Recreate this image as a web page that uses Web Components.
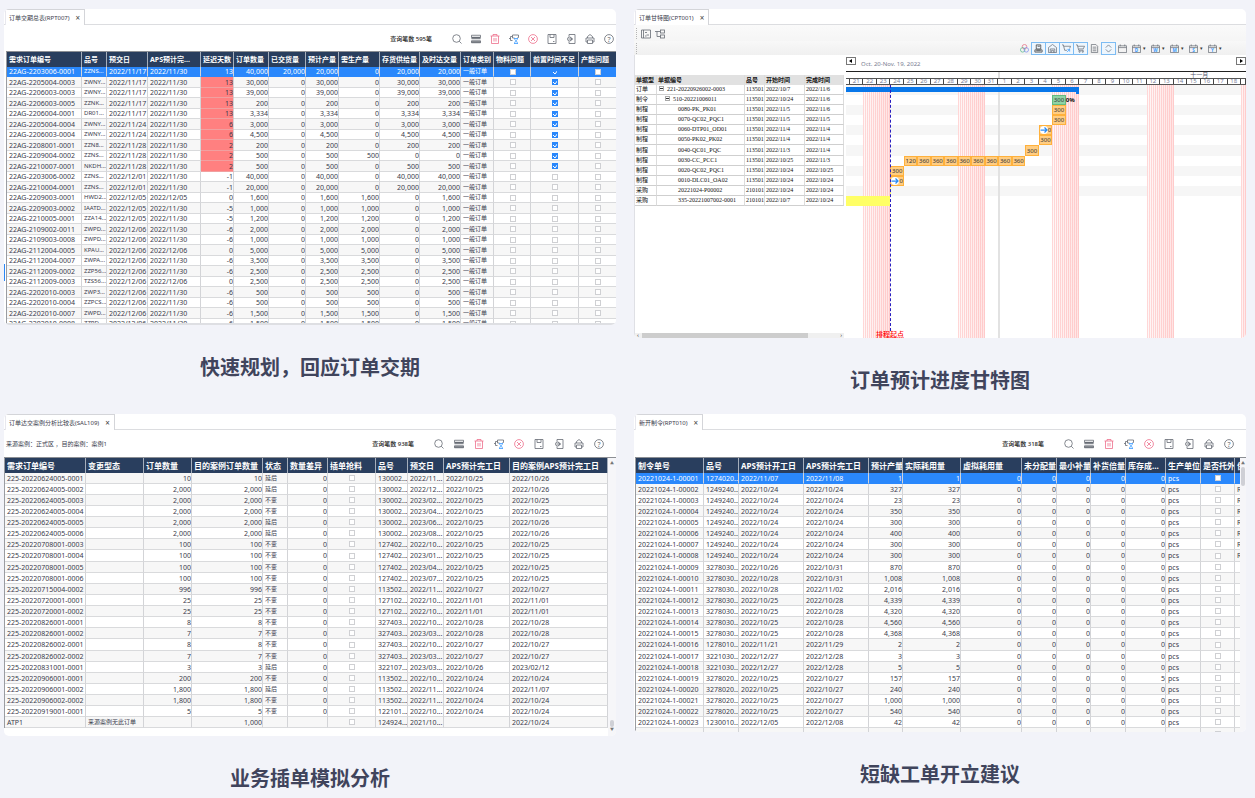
<!DOCTYPE html>
<html lang="zh-CN">
<head>
<meta charset="utf-8">
<title>APS 应用场景</title>
<style>
  html { background: #f2f3f9; }
  body { margin: 0; font-family: "Noto Sans", "Noto Sans CJK SC", sans-serif; color: #3a3b4c; }
</style>
</head>
<body>
<showcase-grid>
  <showcase-panel>
    <report-card tab="订单交期总表(RPT007)" edge>
      <report-toolbar count="595" class="tight"></report-toolbar>
      <data-grid source="delivery" class="dense"></data-grid>
    </report-card>
    <span slot="caption">快速规划，回应订单交期</span>
  </showcase-panel>
  <showcase-panel>
    <report-card tab="订单甘特图(CPT001)">
      <gantt-toolbar></gantt-toolbar>
      <gantt-chart></gantt-chart>
    </report-card>
    <span slot="caption">订单预计进度甘特图</span>
  </showcase-panel>
  <showcase-panel>
    <report-card tab="订单达交案例分析比较表(SAL109)">
      <report-toolbar count="938">来源案例：正式区 ，目的案例：案例1</report-toolbar>
      <data-grid source="compare" class="full"></data-grid>
    </report-card>
    <span slot="caption">业务插单模拟分析</span>
  </showcase-panel>
  <showcase-panel>
    <report-card tab="新开制令(RPT010)">
      <report-toolbar count="318"></report-toolbar>
      <data-grid source="orders" class="orders"></data-grid>
    </report-card>
    <span slot="caption">短缺工单开立建议</span>
  </showcase-panel>
</showcase-grid>

<script>
const G = '#666b73', P = '#ee6f8b', B = '#3b9bff';
const svg = (body, size = 20) => `<svg viewBox="0 0 ${size} ${size}" fill="none" stroke="${G}" stroke-width="1.6" aria-hidden="true">${body}</svg>`;
const ICONS = {
  search: svg('<circle cx="9" cy="9" r="7.6"/><path d="M14.5 14.5 19 19"/>'),
  list: svg('<path d="M1 2.5h18v4H1zM1 9.5h18M1 13.5h18v4H1z"/><path d="M1 7.5h18M1 16h18" stroke-width="3"/>'),
  trash: svg(`<g stroke="${P}"><path d="M1 4h18M6 4V1h8v3M3 4v15h14V4M8 8v7M12 8v7"/></g>`),
  flow: svg(`<path d="M7 5H3v8h4M3 9H0M7 2h12v5h-2M7 2v6h4"/><g stroke="${B}"><path d="M10 9h8M10 19h8M11 9c0 4 6 5 6 10M17 9c0 4-6 5-6 10"/></g>`),
  cancel: svg(`<g stroke="${P}"><circle cx="10" cy="10" r="8.8"/><path d="m6 6 8 8M14 6l-8 8"/></g>`),
  save: svg('<path d="M2 1h16v18H2zM6 1v6h8V1M12 15h3"/>'),
  exporter: svg('<path d="M6 5V1h12v18H6v-4"/><circle cx="7" cy="10" r="4"/><path d="M5 10h8M10 7l3 3-3 3"/>'),
  print: svg('<path d="M5 8V5l5-4 5 4v3M2 8h16v8h-3M2 8v8h3M5 12h10v7H5z"/>'),
  help: svg(`<circle cx="10" cy="10" r="8.8"/><text x="10" y="15" font-size="14" text-anchor="middle" fill="${G}" stroke="none">?</text>`),
  palette: svg('<circle cx="10" cy="6" r="5" stroke="#e66b80"/><circle cx="6" cy="13" r="5" stroke="#57b98a"/><circle cx="14" cy="13" r="5" stroke="#7a8df0"/>'),
  machine: svg('<path d="M5 2h10v9H5zM2 13h16v5H2z" stroke="#333"/><path d="M5 15h10M8 5h5" stroke="#333"/>'),
  house: svg('<path d="M1 8 10 1l9 7v11H1zM5 19v-8h10v8M8 19v-5h4v5"/>'),
  cartOut: svg(`<path d="M0 2h3l3 12h5M4 5h15l-2 5"/><path d="M11 18l6-6M12 12h5v5" stroke="${B}"/>`),
  cart: svg('<path d="M0 2h3l3 12h11M4 5h15l-3 6H6" /><circle cx="8" cy="17" r="1.5"/><circle cx="15" cy="17" r="1.5"/>'),
  page: svg('<path d="M3 1h10l4 4v14H3zM6 7h8M6 11h8M6 15h8"/>'),
  expand: svg('<path d="m4 8 6-6 6 6M4 12l6 6 6-6"/>'),
  board: svg('<path d="M1 2h18v16H1zM5 2v16M8 7h4M11 12h5M8 14h3"/>'),
  tree: svg('<path d="M0 5h10M4 5v10h7"/><rect x="11" y="2" width="8" height="6"/><rect x="11" y="12" width="8" height="6"/>')
};
const calendar = l => svg(`<path d="M1 4h18v15H1zM1 8h18M5 1v4M15 1v4"/>${l ? `<text x="10" y="17" font-size="10" font-weight="700" text-anchor="middle" fill="${B}" stroke="none">${l}</text>` : ''}`);

function define(name, template, setup) {
  const tpl = document.createElement('template');
  customElements.define(name, class extends HTMLElement {
    connectedCallback() {
      if (this.shadowRoot) return;
      tpl.innerHTML = typeof template === 'function' ? template(this) : template;
      this.attachShadow({ mode: 'open' }).appendChild(tpl.content.cloneNode(true));
      if (setup) setup(this);
    }
  });
}

/* ---------- page structure ---------- */
define('showcase-grid', `
<style>
  :host { display: grid; grid-template-columns: minmax(0,1fr) minmax(0,1fr); gap: 19px 18px; padding: 9px 9px 0 4px; align-items: start; }
</style><slot></slot>`);

define('showcase-panel', `
<style>
  :host { display: block; }
  figure { margin: 0; }
  figcaption { margin-top: 29px; text-align: center; font-size: 20px; line-height: 28px; font-weight: 700; color: #40445c; }
</style>
<figure><slot></slot><figcaption><slot name="caption"></slot></figcaption></figure>`);

define('report-card', el => `
<style>
  :host { display: block; position: relative; background: #fff; border-radius: 5px; overflow: hidden; }
  .tabs { display: flex; height: 15px; border-bottom: 1px solid #dcdde0; }
  .tab { display: flex; align-items: center; gap: 6px; margin: 0 0 -1px 1px; padding: 0 4px 0 3px; background: #fff; border: 1px solid #d4d5d9; border-bottom: 0; border-left-color: #e8e8ee; font-size: 6px; line-height: 8px; white-space: nowrap; }
  button { all: unset; font-size: 8px; line-height: 8px; color: #444; }
  .edge { position: absolute; left: 0; top: 255px; width: 1px; height: 17px; background: #2b87f5; }
</style>
<div class="tabs"><div class="tab"><span>${el.getAttribute('tab')}</span><button aria-label="关闭">×</button></div></div>
<slot></slot>${el.hasAttribute('edge') ? '<i class="edge"></i>' : ''}`);

define('report-toolbar', el => `
<style>
  :host { display: flex; align-items: center; height: 27px; padding: 0 12px 0 2px; font-size: 6px; line-height: 8px; white-space: nowrap; --gap: 10px; box-sizing: border-box; }
  :host(.tight) { height: 26px; padding-right: 2px; padding-top: 2px; --gap: 9px; }
  .count { margin-left: auto; margin-right: 20px; font-weight: 500; color: #222; }
  .icons { display: flex; gap: var(--gap); }
  button { all: unset; display: block; width: 10px; height: 10px; }
  svg { display: block; width: 10px; height: 10px; overflow: visible; }
</style>
<span><slot></slot></span><span class="count">查询笔数 ${el.getAttribute('count')}笔</span>
<div class="icons">${[['search','查询'],['list','列表'],['trash','删除'],['flow','流程'],['cancel','取消'],['save','保存'],['exporter','导出'],['print','打印'],['help','帮助']]
  .map(([k, l]) => `<button aria-label="${l}">${ICONS[k]}</button>`).join('')}</div>`);

/* ---------- data ---------- */
const box = v => ({ check: v });
const delivery = `2203006-0001|ZZNS|11/17|11/30|13|40,000|20,000|20,000|0|20,000|20,000
2205004-0003|ZWNY|11/17|11/30|13|30,000|0|30,000|0|30,000|30,000
2206003-0003|ZWNY|11/17|11/30|13|39,000|0|39,000|0|39,000|39,000
2206003-0005|ZZNK|11/17|11/30|13|200|0|200|0|200|200
2206004-0001|DR01|11/17|11/30|13|3,334|0|3,334|0|3,334|3,334
2205004-0004|ZWNY|11/24|11/30|6|3,000|0|3,000|0|3,000|3,000
2206003-0004|ZWNY|11/24|11/30|6|4,500|0|4,500|0|4,500|4,500
2208001-0001|ZZN8|11/28|11/30|2|200|0|200|0|200|200
2209004-0002|ZZNS|11/28|11/30|2|500|0|500|500|0|0
2210007-0001|NKDH|11/28|11/30|2|500|0|500|0|500|500
2203006-0002|ZZNS|12/01|11/30|-1|40,000|0|40,000|0|40,000|40,000
2210004-0001|ZZNS|12/01|11/30|-1|20,000|0|20,000|0|20,000|20,000
2209003-0001|HWD2|12/05|12/05|0|1,600|0|1,600|1,600|0|1,600
2209003-0002|IAATD|12/05|11/30|-5|1,000|0|1,000|1,000|0|1,000
2210005-0001|ZZA14|12/05|11/30|-5|1,200|0|1,200|1,200|0|1,200
2109002-0011|ZWPD|12/06|11/30|-6|2,000|0|2,000|2,000|0|2,000
2109003-0008|ZWPD|12/06|11/30|-6|1,000|0|1,000|1,000|0|1,000
2112004-0005|KPAU|12/06|12/06|0|5,000|0|5,000|5,000|0|5,000
2112004-0007|ZWPA|12/06|11/30|-6|3,500|0|3,500|3,500|0|3,500
2112009-0002|ZZP56|12/06|11/30|-6|2,500|0|2,500|2,500|0|2,500
2112009-0003|TZS56|12/06|12/06|0|2,500|0|2,500|2,500|0|2,500
2202010-0003|ZWP3|12/06|11/30|-6|500|0|500|500|0|500
2202010-0004|ZZPCS|12/06|11/30|-6|500|0|500|500|0|500
2202010-0007|ZWPD|12/06|11/30|-6|1,500|0|1,500|1,500|0|1,500
2202010-0008|ZZPD|12/06|11/30|-6|1,500|0|1,500|1,500|0|1,500`.split('\n').map((line, i) => {
  const c = line.split('|');
  return ['22AG-' + c[0], c[1] + '...', '2022/' + c[2], '2022/' + c[3], ...c.slice(4), '一般订单', box(false), box(i < 10), box(false)];
});
const compare = `0624005-0001|10|延后|130002|2022/11|10/25|2022/10/26
0624005-0002|2,000|延后|130002|2022/12|10/25|2022/10/26
0624005-0003|2,000|不变|130002|2023/02|10/25|2022/10/25
0624005-0004|2,000|不变|130002|2023/04|10/25|2022/10/25
0624005-0005|2,000|延后|130002|2023/06|10/25|2022/10/26
0624005-0006|2,000|延后|130002|2023/08|10/25|2022/10/26
0708001-0003|100|不变|127402|2022/10|10/25|2022/10/25
0708001-0004|100|不变|127402|2023/01|10/25|2022/10/25
0708001-0005|100|不变|127402|2023/04|10/25|2022/10/25
0708001-0006|100|不变|127402|2023/07|10/25|2022/10/25
0715004-0002|996|不变|113502|2022/11|10/27|2022/10/27
0720001-0001|25|不变|127102|2022/10|11/01|2022/11/01
0720001-0002|25|不变|127102|2022/10|11/01|2022/11/01
0826001-0001|8|不变|327403|2022/10|10/28|2022/10/28
0826001-0002|7|不变|327403|2023/03|10/28|2022/10/28
0826002-0001|8|不变|327403|2022/10|10/27|2022/10/27
0826002-0002|7|不变|327403|2023/03|10/27|2022/10/27
0831001-0001|3|延后|322107|2023/03|10/26|2023/02/12
0906001-0001|200|不变|113502|2022/10|10/24|2022/10/24
0906001-0002|1,800|延后|113502|2022/11|10/24|2022/11/07
0906002-0002|1,800|不变|113502|2022/11|10/24|2022/10/24
0919001-0001|5|不变|122101|2022/10|10/24|2022/10/24`.split('\n').map(line => {
  const c = line.split('|');
  return ['225-2022' + c[0], '', c[1], c[1], c[2], '0', box(false), c[3] + '...', c[4] + '...', '2022/' + c[5], c[6]];
});
compare.push(['ATP1', '来源案例无此订单', '', '1,000', '', '', box(false), '124924...', '2021/10...', '', '2022/10/24']);
const orders = `1274020|11/07|11/08|1
1249240|10/24|10/24|327
1249240|10/24|10/24|23
1249240|10/24|10/24|350
1249240|10/24|10/24|300
1249240|10/24|10/24|400
1249240|10/24|10/24|300
1249240|10/24|10/24|300
3278030|10/26|10/31|870
3278030|10/28|10/31|1,008
3278030|10/28|11/02|2,016
3278030|10/25|10/28|4,339
3278030|10/25|10/28|4,320
3278030|10/25|10/28|4,560
3278030|10/25|10/28|4,368
1278010|11/21|11/29|2
3221030|12/27|12/28|3
3221030|12/27|12/28|5
3278020|10/25|10/27|157
3278020|10/25|10/27|240
3278020|10/25|10/27|1,000
3278020|10/25|10/27|540
1230010|12/05|12/08|42`.split('\n').map((line, i) => {
  const c = line.split('|');
  return ['20221024-1-000' + String(i + 1).padStart(2, '0'), c[0] + '...', '2022/' + c[1], '2022/' + c[2], c[3], c[3], '0', '0', '0', '0', i === 18 ? '5' : '0', 'pcs', box(false), i > 0 && i < 8 ? 'R' : ''];
});
orders.push(Array.from({ length: 14 }, (_, i) => i === 12 ? box(false) : ''));

/* column: [title, width, alignment]; l = left, r = right, s = small text, c = tick box */
const SOURCES = {
  delivery: {
    rows: delivery, selected: 0, shade: 1, scroll: 'none',
    alert: (r, c) => c === 4 && r > 0 && r < 10,
    cols: [['需求订单编号',75,'l'],['品号',25,'s'],['预交日',41,'l'],['APS预计完...',53,'l'],['延迟天数',33,'r'],['订单数量',35,'r'],['已交货量',37,'r'],['预计产量',33,'r'],['需生产量',41,'r'],['存货供给量',40,'r'],['及时达交量',41,'r'],['订单类别',33,'s'],['物料问题',37,'c'],['前置时间不足',48,'c'],['产能问题',38,'c']]
  },
  compare: {
    rows: compare, selected: -1, shade: 0, scroll: 'bottom',
    cols: [['需求订单编号',81,'l'],['变更型态',58,'s'],['订单数量',48,'r'],['目的案例订单数量',71,'r'],['状态',25,'s'],['数量差异',40,'r'],['插单抢料',48,'c'],['品号',32,'l'],['预交日',36,'l'],['APS预计完工日',66,'l'],['目的案例APS预计完工日',98,'l']]
  },
  orders: {
    rows: orders, selected: 0, shade: 1, scroll: 'top',
    cols: [['制令单号',68,'l'],['品号',35,'l'],['APS预计开工日',65,'l'],['APS预计完工日',65,'l'],['预计产量',34,'r'],['实际耗用量',58,'r'],['虚拟耗用量',61,'r'],['未分配量',35,'r'],['最小补量',34,'r'],['补货倍量',35,'r'],['库存成...',40,'r'],['生产单位',35,'l'],['是否托外',34,'c'],['供应',6,'l']]
  }
};

define('data-grid', el => {
  const d = SOURCES[el.getAttribute('source')];
  const cell = (v, r, c) => {
    const [title, , align] = d.cols[c];
    const body = v && v.check !== undefined ? `<input type="checkbox" aria-label="${title}"${v.check ? ' checked' : ''}>` : v;
    return `<td class="${align}${d.alert && d.alert(r, c) ? ' alert' : ''}">${body}</td>`;
  };
  return `
<style>
  :host { display: flex; height: 279px; overflow: hidden; border-top: 1px solid #8c8f94; box-sizing: border-box; --head: 8px; --head-height: 15px; }
  :host(.dense) { height: 274px; margin-left: 2px; --head: 7px; }
  :host(.orders) { height: 275px; margin-left: 1px; }
  .view { flex: 1; min-width: 0; overflow: hidden; }
  :host(.dense) .view { border-bottom: 2px solid #dedfe3; box-sizing: border-box; }
  table { width: 100%; table-layout: fixed; border-collapse: separate; border-spacing: 0; border-left: 1px solid #9a9ca1; box-sizing: border-box; }
  th, td { box-sizing: border-box; padding: 0 1px 0 2px; overflow: hidden; white-space: nowrap; text-overflow: clip; text-align: left; border-right: 1px solid #d3d4d7; }
  th { height: var(--head-height); background: #293e5e; color: #fff; font-size: var(--head); line-height: 10px; font-weight: 700; border-right-color: #a5aebb; }
  td { border-bottom: 1px solid #d9dadc; font-size: 7px; line-height: 9px; }
  tbody tr { height: 11px; }
  tbody tr:nth-child(8n) { height: 12px; }
  :host(.dense) tbody tr { height: 10px; }
  :host(.dense) tbody tr:nth-child(2n) { height: 11px; }
  tr.shade td { background: #f7f7f7; }
  td.r { text-align: right; padding-right: 0; }
  td.s { font-size: 6px; }
  td.c { text-align: center; line-height: 0; }
  tr td.alert, tr.shade td.alert { background: #ff8080; border-bottom-color: #f0a0a0; }
  tr.on td { background: #2a88fc; color: #fff; border-bottom-color: #2a88fc; }
  input { appearance: none; display: inline-block; width: 6px; height: 6px; margin: 0; border: 1px solid #cfd0d3; background: #fff; box-sizing: border-box; vertical-align: middle; }
  input:checked { border-color: #2a88fc; background: #2a88fc url("data:image/svg+xml,%3Csvg xmlns='http://www.w3.org/2000/svg' viewBox='0 0 6 6'%3E%3Cpath d='M1 3l2 2 3-4' fill='none' stroke='white'/%3E%3C/svg%3E") center / 6px 6px no-repeat; }
  .bar { display: flex; flex-direction: column; align-items: center; width: 8px; padding: 3px 0; box-sizing: border-box; background: #f6f6f9; font-size: 4px; line-height: 6px; color: #777; }
  :host(.orders) .bar { width: 6px; }
  .thumb { width: 4px; border-radius: 2px; background: #cfd0d6; }
  .bar.top .thumb { height: 19px; }
  .bar.bottom .thumb { height: 7px; margin-top: auto; }
</style>
<div class="view"><table>
  <colgroup>${d.cols.map(c => `<col style="width:${c[1]}px">`).join('')}</colgroup>
  <thead><tr>${d.cols.map(c => `<th scope="col">${c[0]}</th>`).join('')}</tr></thead>
  <tbody>${d.rows.map((r, i) => `<tr class="${i === d.selected ? 'on' : i % 2 === d.shade ? 'shade' : ''}">${r.map((v, c) => cell(v, i, c)).join('')}</tr>`).join('')}</tbody>
</table></div>
${d.scroll === 'none' ? '' : `<div class="bar ${d.scroll}"><span>▲</span><i class="thumb"></i>${d.scroll === 'bottom' ? '<span>▼</span>' : ''}</div>`}`;
});

/* ---------- gantt ---------- */
define('gantt-toolbar', () => {
  const b = (k, l, on) => `<button aria-label="${l}" class="${on ? 'on' : ''}">${ICONS[k]}</button>`;
  return `
<style>
  :host { display: block; background: linear-gradient(#fafafa, #f1f1f1); }
  .row { display: flex; align-items: center; height: 15px; padding-left: 2px; }
  .row:first-of-type { height: 16px; }
  .row + .row { height: 14px; background: linear-gradient(#f8f8f8, #f0f0f0); padding-right: 22px; }
  .grip { height: 11px; border-left: 1px dotted #b5b5b5; margin-right: 2px; }
  button { all: unset; box-sizing: border-box; width: 14px; height: 13px; padding: 1px; border: 1px solid transparent; }
  .on { border-color: #7dbcf3; background: #eef6fd; margin-right: -1px; width: 15px; }
  .end { display: flex; margin-left: auto; align-items: center; }
  svg { display: block; width: 9px; height: 9px; margin: auto; }
  .row:first-of-type svg { width: 10px; height: 10px; }
  .drop { display: flex; align-items: center; width: 19px; color: #333; font-size: 5px; line-height: 8px; }
</style>
<div class="row"><i class="grip"></i>${b('board', '看板')}${b('tree', '树形')}</div>
<div class="row"><i class="grip"></i><div class="end">
${b('palette', '颜色')}${b('machine', '机台', 1)}${b('house', '仓库', 1)}${b('cartOut', '出货', 1)}${b('cart', '采购', 1)}${b('page', '单据')}${b('expand', '展开', 1)}
<button aria-label="日历">${calendar('')}</button>
${['D', 'W', 'M', 'S', 'Y'].map(l => `<span class="drop"><button aria-label="${l}">${calendar(l)}</button>▾</span>`).join('')}
</div></div>`;
});

define('gantt-chart', () => {
  const tasks = [
    ['订单', 0, '221-20220926002-0003', '113501', '2022/10/7', '2022/11/6'],
    ['制令', 1, '510-20221006011', '113501', '2022/10/24', '2022/11/6'],
    ['制程', 2, '0080-PK_PK01', '113501', '2022/11/5', '2022/11/6'],
    ['制程', 2, '0070-QC02_PQC1', '113501', '2022/11/5', '2022/11/5'],
    ['制程', 2, '0060-DTP01_OD01', '113501', '2022/11/4', '2022/11/4'],
    ['制程', 2, '0050-PK02_PK02', '113501', '2022/11/4', '2022/11/4'],
    ['制程', 2, '0040-QC01_PQC', '113501', '2022/11/3', '2022/11/4'],
    ['制程', 2, '0030-CC_PCC1', '113501', '2022/10/25', '2022/11/3'],
    ['制程', 2, '0020-QC02_PQC1', '113501', '2022/10/24', '2022/10/25'],
    ['制程', 2, '0010-DLC01_OA02', '113501', '2022/10/24', '2022/10/24'],
    ['采购', 2, '20221024-P00002', '210101', '2022/10/24', '2022/10/24'],
    ['采购', 2, '335-20221007002-0001', '210101', '2022/10/7', '2022/10/24']
  ];
  const days = Array.from({ length: 29 }, (_, i) => i < 11 ? 21 + i : i - 10);
  const oct = d => d - 19, nov = d => d + 12;
  const at = (row, col, cls, text = '', span = 1) => `<div class="${cls}" style="grid-area:${row}/${col}/auto/span ${span}">${text}</div>`;
  const arrow = '<svg viewBox="0 0 16 16"><circle cx="8" cy="8" r="8" fill="#fff"/><path d="M1 8h13M9 3l5 5-5 5" fill="none" stroke="#2b8cf5" stroke-width="2.5"/></svg>0';
  const bars = [
    at(1, 1, 'total', '', 18), at(2, nov(5), 'job done', '300'), at(2, nov(6), 'pct', '0%'),
    at(3, nov(5), 'job', '300'), at(4, nov(5), 'job', '300'), at(5, nov(4), 'job', arrow),
    at(6, nov(4), 'job', '300'), at(7, nov(3), 'job', '300'),
    ...['120', 360, 360, 360, 360, 360, 360, 360, 360].map((v, i) => at(8, oct(25) + i, 'job', v)),
    at(9, oct(24), 'job', '300'), at(10, oct(24), 'job', arrow), at(11, oct(24), 'buy thin'), at(12, 1, 'buy', '', 4)
  ].join('');
  return `
<style>
  :host { display: grid; grid-template-columns: minmax(0,210fr) minmax(0,402fr); height: 283px; --rows: repeat(6,10px) 11px repeat(5,10px) 1fr; }
  .left { display: flex; flex-direction: column; padding: 20px 0 0 1px; box-shadow: inset 1px 0 #dfe0e5; }
  table { width: 100%; table-layout: fixed; border-collapse: separate; border-spacing: 0; font-family: "Liberation Serif", "Noto Sans CJK SC", serif; color: #111; }
  th, td { box-sizing: border-box; padding: 0 0 0 1px; overflow: hidden; white-space: nowrap; text-align: left; font-size: 6px; line-height: 9px; border-right: 1px solid #dcdcdc; border-bottom: 1px solid #cfcfcf; }
  th { height: 10px; background: #e1e1e1; font-family: "Noto Sans CJK SC", sans-serif; font-weight: 700; border-bottom-color: #e1e1e1; }
  tbody tr { height: 10px; }
  tbody tr:nth-child(7n) { height: 11px; }
  .lv0 { padding-left: 2px; } .lv1 { padding-left: 8px; } .lv2 { padding-left: 21px; }
  .box { display: inline-block; box-sizing: border-box; width: 5px; height: 5px; margin-right: 3px; border: 1px solid #aaa; background: linear-gradient(#333, #333) center / 3px 1px no-repeat; }
  .hscroll { display: flex; align-items: center; gap: 3px; height: 5px; margin-top: auto; padding: 0 2px; background: #f0f0f0; font-size: 6px; line-height: 5px; color: #333; }
  .hscroll i { flex: 0 1 166px; align-self: stretch; background: #cdcdcd; }
  .hscroll span:last-child { margin-left: auto; }
  .right { display: flex; flex-direction: column; padding-left: 2px; min-width: 0; overflow: hidden; }
  .nav { display: flex; height: 17px; box-sizing: border-box; padding-top: 2px; font-size: 6px; line-height: 8px; color: #7b8093; border-bottom: 1px solid #222; }
  .nav button { all: unset; display: flex; align-items: center; justify-content: center; box-sizing: border-box; width: 10px; height: 8px; border: 1px solid #777; color: #111; }
  .nav svg { width: 4px; height: 4px; }
  .nav span { padding: 3px 0 0 5px; flex: 1; }
  .cols { display: grid; grid-template-columns: minmax(0,8fr) repeat(29, minmax(0,27fr)) minmax(0,10fr); }
  .months { height: 6px; font-size: 6px; line-height: 6px; color: #555a70; }
  .months span { grid-column: 13 / -1; padding-left: 190px; border-left: 2px solid #ddd; }
  .scale { height: 7px; box-sizing: border-box; border-top: 1px solid #555; border-bottom: 1px solid #555; font-size: 6px; line-height: 5px; text-align: center; color: #7b8299; }
  .scale span { border-right: 1px solid #444; overflow: hidden; }
  .body { position: relative; flex: 1; grid-template-rows: var(--rows); overflow: hidden; }
  .band { grid-column: 1 / 31; background: #f6f6f6; }
  .off { grid-row: 1 / -1; background: repeating-linear-gradient(90deg, #ff969655 0 1px, transparent 1px 2px), linear-gradient(90deg, #fff8f8, #ffe4e4); }
  .month-line { grid-area: 1 / 13 / -1 / 14; border-left: 2px solid #e2e2e2; }
  .job { z-index: 1; display: flex; align-items: center; justify-content: center; box-sizing: border-box; border: 1px solid #ffb13c; background: #ffcd82; color: #333; font-size: 6px; line-height: 8px; overflow: hidden; }
  .job svg { flex: none; width: 8px; height: 8px; }
  .done { background: #90d3a5; border-color: #63bb80; }
  .pct { z-index: 1; font-size: 6px; line-height: 10px; font-weight: 700; color: #111; }
  .total { z-index: 1; height: 5px; margin-top: 2px; background: #0877ea; position: relative; }
  .total::after { content: ""; position: absolute; right: 0; top: 0; width: 3px; height: 7px; background: #0877ea; }
  .buy { z-index: 1; background: #ffff66; }
  .thin { width: 1px; }
  .start { z-index: 2; grid-area: 1 / 5 / -1 / 6; height: 246px; width: 0; border-left: 1px dashed #2a1fc0; }
  .start-label { position: absolute; z-index: 2; left: 30px; bottom: 0; font-size: 7px; line-height: 7px; font-weight: 500; color: #f00; white-space: nowrap; }
</style>
<div class="left">
  <table>
    <colgroup><col style="width:22px"><col style="width:88px"><col style="width:20px"><col style="width:40px"><col style="width:39px"></colgroup>
    <thead><tr><th scope="col">单据型</th><th scope="col">单据编号</th><th scope="col">品号</th><th scope="col">开始时间</th><th scope="col">完成时间</th></tr></thead>
    <tbody>${tasks.map(t => `<tr><td>${t[0]}</td><td class="lv${t[1]}">${t[1] < 2 ? '<i class="box"></i>' : ''}${t[2]}</td><td>${t[3]}</td><td>${t[4]}</td><td>${t[5]}</td></tr>`).join('')}</tbody>
  </table>
  <div class="hscroll"><span>‹</span><i></i><span>›</span></div>
</div>
<div class="right">
  <div class="nav"><button aria-label="上一段"><svg viewBox="0 0 4 4"><path d="M3 0v4L0 2z"/></svg></button><span>Oct. 20-Nov. 19, 2022</span><button aria-label="下一段"><svg viewBox="0 0 4 4"><path d="M1 0v4l3-2z"/></svg></button></div>
  <div class="cols months"><span>十一月</span></div>
  <div class="cols scale"><span></span>${days.map(d => `<span>${d}</span>`).join('')}<span></span></div>
  <div class="cols body">
    ${[1, 3, 5, 7, 9, 11].map(r => `<div class="band" style="grid-row:${r}"></div>`).join('')}
    ${[[3, 5], [10, 12], [17, 19], [24, 26], [31, 32]].map(([a, z]) => `<div class="off" style="grid-column:${a}/${z}"></div>`).join('')}
    <div class="month-line"></div>${bars}
    <div class="start"></div><span class="start-label">排程起点</span>
  </div>
</div>`;
});
</script>
</body>
</html>
